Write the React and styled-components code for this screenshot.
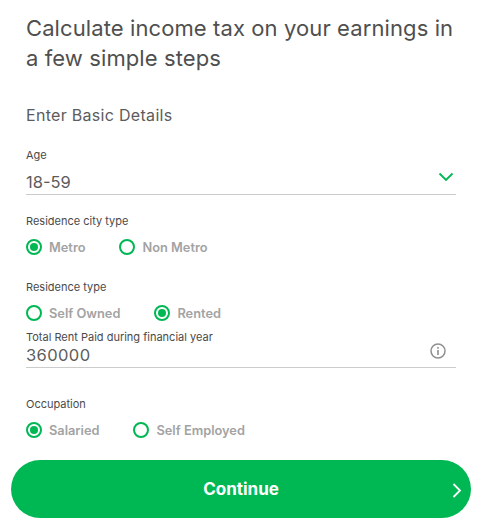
import React from 'react'
import styled, { createGlobalStyle } from 'styled-components'

const GlobalStyle = createGlobalStyle`
  html, body {
    margin: 0;
    padding: 0;
    background: #fff;
  }
  body {
    font-family: "Inter", "Open Sans", sans-serif;
  }
`

const Page = styled.div`
  width: 482px;
  height: 523px;
  overflow: hidden;
  display: flex;
  flex-direction: column;
`

const Form = styled.div`
  padding: 13px 26px 0;
  display: flex;
  flex-direction: column;
`

const Title = styled.h1`
  margin: 0;
  font-size: 22px;
  line-height: 30px;
  font-weight: 400;
  letter-spacing: 0.1px;
  color: #4f4f4f;
`

const SubTitle = styled.h2`
  margin: 31px 0 0;
  font-size: 16px;
  line-height: 22px;
  font-weight: 400;
  letter-spacing: 0.3px;
  color: #5c5c5c;
`

const Label = styled.div`
  font-size: 11px;
  line-height: 16px;
  color: #4a4a4a;
  margin-top: ${p => p.$top}px;
`

const Field = styled.div`
  display: flex;
  align-items: flex-end;
  justify-content: space-between;
  height: ${p => p.$height}px;
  padding-bottom: 2px;
  box-sizing: border-box;
  font-size: 16.5px;
  line-height: 20px;
  letter-spacing: ${p => p.$spacing || 0}px;
  color: #5c5c5c;
  box-shadow: 0 1px 0 #ccc;
  margin-bottom: 1px;
`

const FieldIcon = styled.svg`
  margin-right: ${p => p.$right}px;
  margin-bottom: ${p => p.$bottom}px;
`

const RadioRow = styled.div`
  display: flex;
  gap: 34px;
  margin-top: 9px;
`

const Option = styled.div`
  display: flex;
  align-items: center;
  gap: 7px;
  height: 18px;
  font-size: 12.8px;
  font-weight: 600;
  color: #a3a3a3;
`

const Ring = styled.span`
  width: 16px;
  height: 16px;
  box-sizing: border-box;
  border: 2px solid #00b853;
  border-radius: 50%;
  display: flex;
  align-items: center;
  justify-content: center;
  flex-shrink: 0;
  &::after {
    content: "";
    width: 8px;
    height: 8px;
    border-radius: 50%;
    background: ${p => (p.$on ? '#00b853' : 'transparent')};
  }
`

const ContinueButton = styled.button`
  position: relative;
  margin: 21px 0 0 11px;
  width: 460px;
  height: 58px;
  border: 0;
  border-radius: 29px;
  background: #00b853;
  color: #fff;
  font-family: inherit;
  font-size: 17px;
  font-weight: 700;
  display: flex;
  align-items: center;
  justify-content: center;
`

const ButtonArrow = styled.svg`
  position: absolute;
  right: 9px;
  top: 23px;
`

function Radio({ on, children }) {
  return (
    <Option>
      <Ring $on={on} />
      {children}
    </Option>
  )
}

export default function App() {
  return (
    <Page>
      <GlobalStyle />
      <Form>
        <Title>Calculate income tax on your earnings in a few simple steps</Title>
        <SubTitle>Enter Basic Details</SubTitle>

        <Label $top={21}>Age</Label>
        <Field $height={31}>
          18-59
          <FieldIcon $right={2} $bottom={10} width="16" height="10" viewBox="0 0 16 10" fill="none">
            <path d="M1.5 1.5 L8 8 L14.5 1.5" stroke="#00b853" strokeWidth="1.8" />
          </FieldIcon>
        </Field>

        <Label $top={18}>Residence city type</Label>
        <RadioRow>
          <Radio on>Metro</Radio>
          <Radio>Non Metro</Radio>
        </RadioRow>

        <Label $top={23}>Residence type</Label>
        <RadioRow>
          <Radio>Self Owned</Radio>
          <Radio on>Rented</Radio>
        </RadioRow>

        <Label $top={7}>Total Rent Paid during financial year</Label>
        <Field $height={22} $spacing={0.4}>
          360000
          <FieldIcon $right={10} $bottom={6} width="16" height="16" viewBox="0 0 16 16" fill="none">
            <circle cx="8" cy="8" r="7" stroke="#8f8f8f" strokeWidth="1.5" />
            <rect x="7.2" y="7" width="1.6" height="5" fill="#8f8f8f" />
            <rect x="7.2" y="4" width="1.6" height="1.7" fill="#8f8f8f" />
          </FieldIcon>
        </Field>

        <Label $top={28}>Occupation</Label>
        <RadioRow>
          <Radio on>Salaried</Radio>
          <Radio>Self Employed</Radio>
        </RadioRow>
      </Form>
      <ContinueButton>
        Continue
        <ButtonArrow width="10" height="15" viewBox="0 0 10 15" fill="none">
          <path d="M1.5 1 L8 7.5 L1.5 14" stroke="#fff" strokeWidth="1.8" />
        </ButtonArrow>
      </ContinueButton>
    </Page>
  )
}
